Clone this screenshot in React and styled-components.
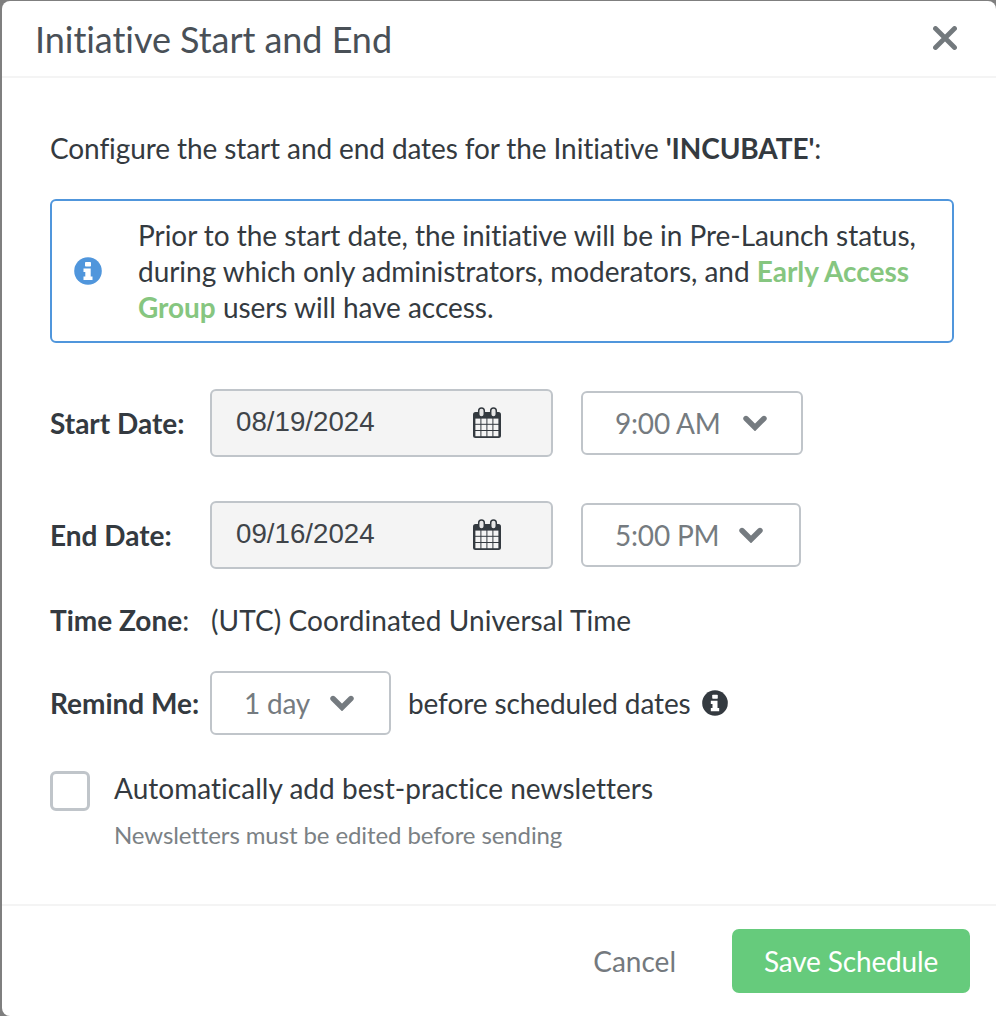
import React from "react";
import styled, { createGlobalStyle } from "styled-components";

const Global = createGlobalStyle`
  html, body { margin: 0; padding: 0; height: 100%; background: #7f7f7f; }
  #root { height: 100%; }
  * { box-sizing: border-box; }
`;
const Page = styled.div`
  width: 996px; height: 1016px; padding: 1px 0 0 2px; overflow: hidden;
  font-family: Lato, "Open Sans", sans-serif; color: #343a40;
`;
const Modal = styled.div`
  width: 994px; height: 1015px; background: #fff; border-radius: 8px 8px 0 8px;
  display: flex; flex-direction: column;
`;
const Header = styled.header`
  height: 77px; flex: none; border-bottom: 2px solid #f4f4f4; padding: 0 37px 0 33px;
  display: flex; align-items: center; justify-content: space-between;
`;
const Title = styled.h1`
  margin: 2px 0 0; font-size: 36px; font-weight: 400; color: #495057; line-height: 75px; letter-spacing: -0.05px;
`;
const Close = styled.button`
  border: 0; background: none; padding: 0; display: flex; margin: -1px 2px 0 0;
`;
const Body = styled.main`
  flex: 1; padding: 52px 42px 0 48px; font-size: 28px; line-height: 36px;
`;
const Intro = styled.p`margin: 0 0 33px; letter-spacing: -0.1px; strong { font-weight: 700; }`;
const Alert = styled.div`
  width: 904px; height: 144px; border: 2px solid #5096dc; border-radius: 6px; letter-spacing: -0.04px;
  display: flex; align-items: center; padding: 0 20px 0 22px; margin-bottom: 46px;
`;
const AlertIcon = styled.span`
  display: flex; margin-right: 36px; flex: none;
`;
const GreenLink = styled.a`color: #86c680; font-weight: 700;`;
const Row = styled.div`
  display: flex; align-items: center; height: ${p => p.$h}px; margin-bottom: ${p => p.$mb || 0}px;
`;
const Label = styled.div`width: 160px; flex: none; font-weight: 700; color: #343a40;`;
const Normal = styled.span`font-weight: 400;`;
const ZoneText = styled.span`letter-spacing: 0.08px; margin-left: 1px;`;
const DateInput = styled.div`
  width: 343px; height: 68px; background: #f4f4f4; border: 2px solid #c0c5ca; border-radius: 6px;
  display: flex; align-items: center; justify-content: space-between; padding: 0 50px 2px 24px;
  font-family: "Liberation Sans", Arial, sans-serif; font-size: 27.7px; color: #3f4449; margin-right: 28px;
`;
const Select = styled.div`
  width: ${p => p.$w}px; height: 64px; background: #fff; border: 2px solid #c0c5ca; border-radius: 6px;
  display: flex; align-items: center; padding-left: ${p => p.$pl}px; color: #757b80; font-size: 28px; letter-spacing: -0.2px;
  svg { margin-left: ${p => p.$gap}px; flex: none; }
`;
const After = styled.span`margin-left: 17px; letter-spacing: -0.1px;`;
const Tip = styled.span`display: inline-flex; margin-left: 11px;`;
const Check = styled.div`
  width: 40px; height: 40px; border: 3px solid #c0c5ca; border-radius: 6px; margin-right: 24px; flex: none;
`;
const CheckText = styled.span`padding-bottom: 7px; letter-spacing: 0.03px;`;
const Hint = styled.div`
  margin: 8px 0 0 64px; font-size: 24px; line-height: 32px; color: #7b8185; letter-spacing: -0.1px;
`;
const Footer = styled.footer`
  height: 112px; flex: none; border-top: 2px solid #f4f4f4; padding: 23px 26px 0 0;
  display: flex; justify-content: flex-end; align-items: flex-start;
`;
const Cancel = styled.button`
  border: 0; background: none; font: inherit; font-size: 28px; color: #74797e; height: 64px; padding: 0; margin-right: 56px;
`;
const Save = styled.button`
  width: 238px; height: 64px; border: 0; border-radius: 7px; background: #66cb7c; color: #fff;
  font: inherit; font-size: 28px; letter-spacing: -0.15px;
`;

const CalendarIcon = () => {
  const cells = [];
  for (let r = 0; r < 3; r++) {
    for (let c = 0; c < 4; c++) {
      cells.push(<rect key={`${r}-${c}`} x={2.4 + c * 6} y={11.6 + r * 6.2} width="5" height="5.2" fill="#f4f4f4" />);
    }
  }
  return (
    <svg width="28" height="31" viewBox="0 0 28 31" style={{ flex: "none" }}>
      <rect x="0" y="5" width="28" height="26" rx="2.5" fill="#343a40" />
      {cells}
      <rect x="5.7" y="1" width="5.6" height="9" rx="2.8" fill="#e6e6e6" stroke="#343a40" strokeWidth="1.5" />
      <rect x="17.700" y="1" width="5.6" height="9" rx="2.8" fill="#e6e6e6" stroke="#343a40" strokeWidth="1.5" />
    </svg>
  );
};

const Chevron = () => (
  <svg width="24" height="16" viewBox="0 0 24 16">
    <path d="M3 3.500 L12 12.500 L21 3.500" fill="none" stroke="#757b80" strokeWidth="5.400" strokeLinejoin="miter" strokeLinecap="round" />
  </svg>
);

const CloseIcon = () => (
  <svg width="24" height="24" viewBox="0 0 24 24">
    <path d="M2.500 2.500 L21.500 21.500 M21.500 2.500 L2.500 21.500" fill="none" stroke="#73797d" strokeWidth="4.800" strokeLinecap="round" />
  </svg>
);

const InfoIcon = ({ size, color }) => (
  <svg width={size} height={size} viewBox="0 0 28 28">
    <circle cx="14" cy="14" r="13.800" fill={color} />
    <rect x="11" y="5" width="6" height="4.500" rx="0.8" fill="#fff" />
    <path d="M9.500 11.500 H16.700 V19.500 H18.500 V23 H9.500 V19.500 H11.300 V15 H9.500 Z" fill="#fff" />
  </svg>
);

export default function App() {
  return (
    <Page>
      <Global />
      <Modal>
        <Header>
          <Title>Initiative Start and End</Title>
          <Close aria-label="Close"><CloseIcon /></Close>
        </Header>
        <Body>
          <Intro>Configure the start and end dates for the Initiative <strong>'INCUBATE'</strong>:</Intro>
          <Alert>
            <AlertIcon><InfoIcon size={28} color="#5096dc" /></AlertIcon>
            <div>
              Prior to the start date, the initiative will be in Pre-Launch status, during which only administrators, moderators, and <GreenLink>Early Access Group</GreenLink> users will have access.
            </div>
          </Alert>
          <Row $h={68} $mb={44}>
            <Label>Start Date:</Label>
            <DateInput>08/19/2024<CalendarIcon /></DateInput>
            <Select $w={222} $pl={32} $gap={22}>9:00 AM<Chevron /></Select>
          </Row>
          <Row $h={68} $mb={33}>
            <Label>End Date:</Label>
            <DateInput>09/16/2024<CalendarIcon /></DateInput>
            <Select $w={220} $pl={32} $gap={20}>5:00 PM<Chevron /></Select>
          </Row>
          <Row $h={36} $mb={33}>
            <Label>Time Zone<Normal>:</Normal></Label>
            <ZoneText>(UTC) Coordinated Universal Time</ZoneText>
          </Row>
          <Row $h={64} $mb={36}>
            <Label>Remind Me:</Label>
            <Select $w={181} $pl={32} $gap={20}>1 day<Chevron /></Select>
            <After>before scheduled dates</After>
            <Tip><InfoIcon size={26} color="#343a40" /></Tip>
          </Row>
          <Row $h={40}>
            <Check />
            <CheckText>Automatically add best-practice newsletters</CheckText>
          </Row>
          <Hint>Newsletters must be edited before sending</Hint>
        </Body>
        <Footer>
          <Cancel>Cancel</Cancel>
          <Save>Save Schedule</Save>
        </Footer>
      </Modal>
    </Page>
  );
}
